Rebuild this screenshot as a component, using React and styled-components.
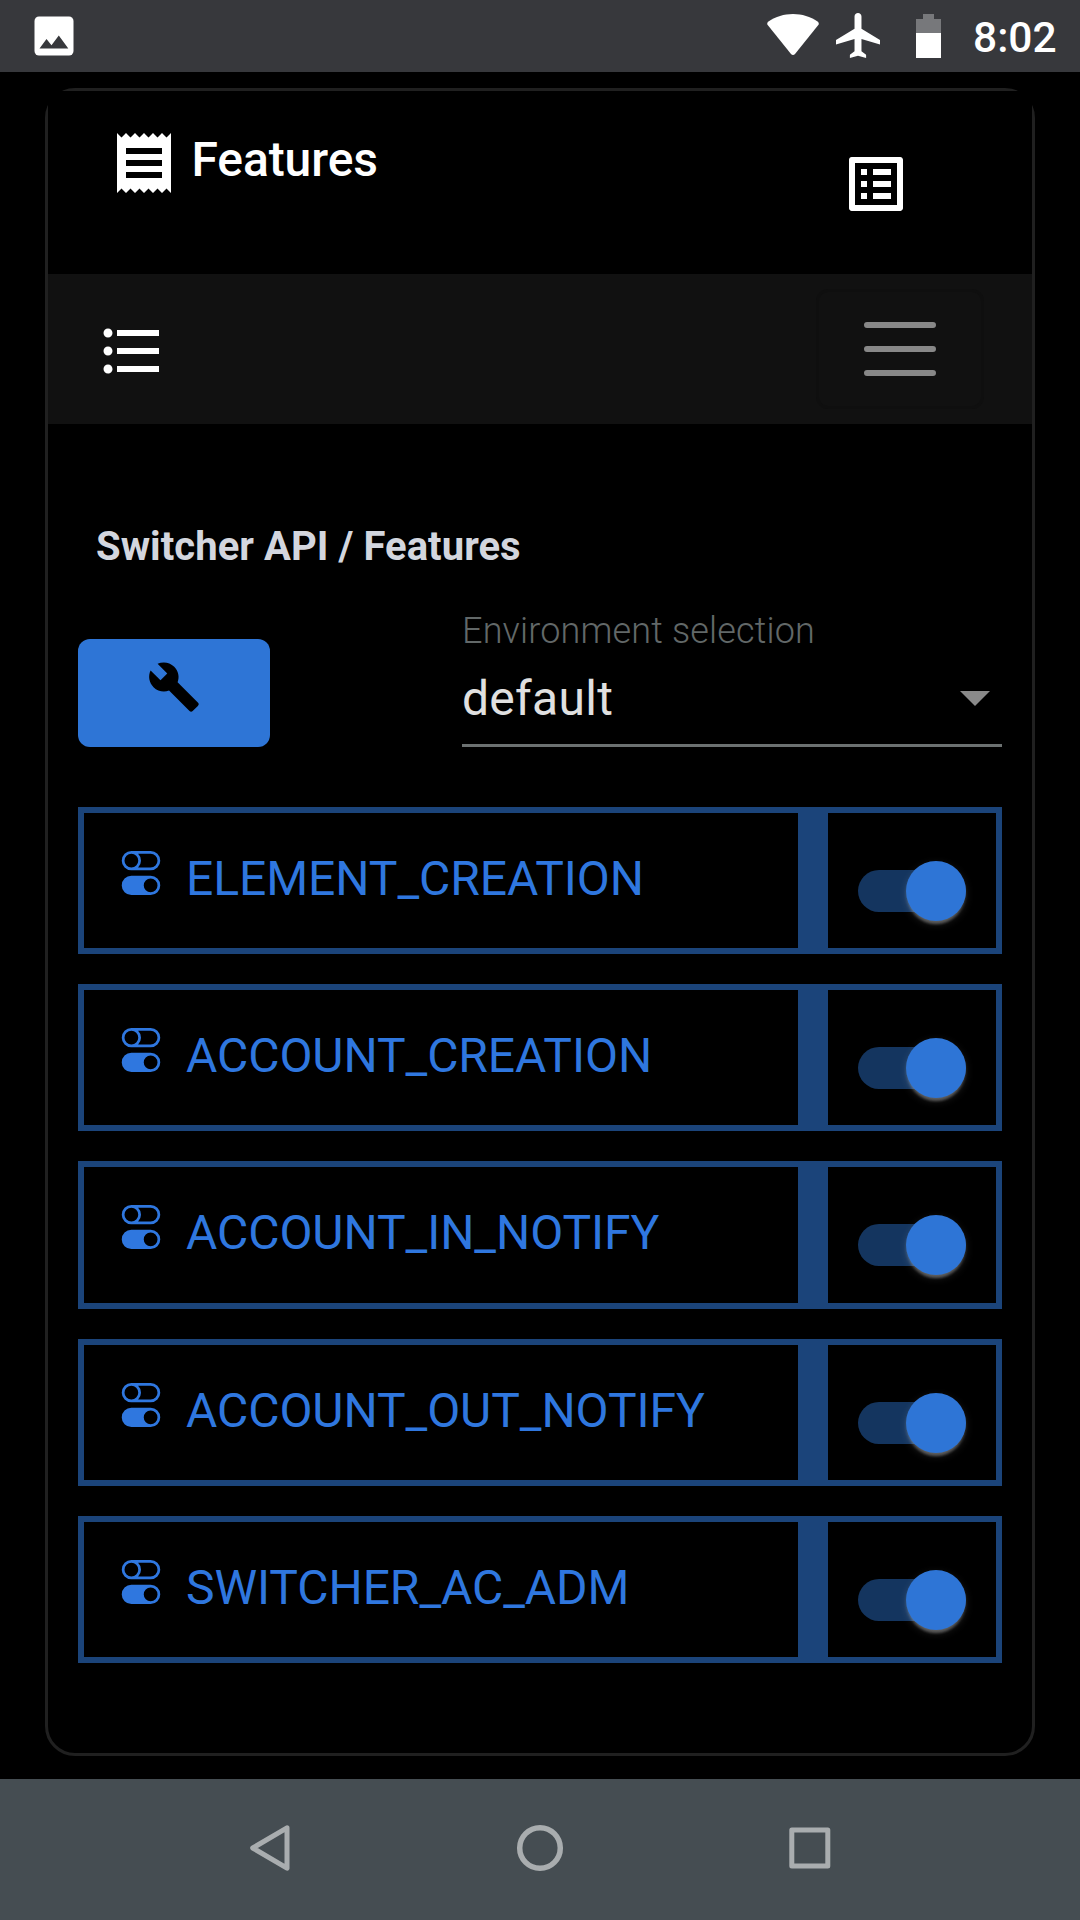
import React from "react";
import styled, { createGlobalStyle } from "styled-components";

const BLUE = "#2e75d6";
const LINK = "#2f77df";
const NAVY = "#1b447a";

const GlobalStyle = createGlobalStyle`
  * { box-sizing: border-box; }
  body { margin: 0; background: #000; font-family: Roboto, "Liberation Sans", sans-serif; }
  svg { display: block; flex: none; }
`;

const Screen = styled.div`
  width: 1080px;
  height: 1920px;
  display: flex;
  flex-direction: column;
  background: #000;
  overflow: hidden;
`;

const StatusBar = styled.header`
  height: 72px;
  flex: none;
  display: flex;
  align-items: flex-start;
  justify-content: space-between;
  padding: 0 24px 0 34px;
  background: #37383c;
  color: #fff;
`;

const StatusIcons = styled.div`
  display: flex;
  align-items: flex-start;
`;

const StatusSlot = styled.div`
  margin: ${(p) => p.$top}px ${(p) => p.$right}px 0 0;
`;

const Clock = styled.div`
  width: 83px;
  height: 72px;
  font-size: 42.5px;
  font-weight: 500;
  line-height: 75px;
  white-space: nowrap;
`;

const Card = styled.main`
  width: 990px;
  height: 1668px;
  flex: none;
  margin: 16px 0 23px 45px;
  border: 3px solid #202020;
  border-radius: 30px;
`;

const CardHeader = styled.div`
  height: 183px;
  display: flex;
  justify-content: space-between;
  padding: 36px 120px 0 60px;
  background: #000;
  color: #fff;
`;

const Heading = styled.h1`
  display: flex;
  margin: 0;
  gap: 11.5px;
  font-size: 48px;
  font-weight: 500;
  line-height: 65px;
  letter-spacing: -0.1px;
`;

const HeaderAction = styled.div`
  padding-top: 21px;
`;

const Toolbar = styled.div`
  height: 150px;
  display: flex;
  align-items: flex-start;
  justify-content: space-between;
  padding: 15px 48px 0 48px;
  background: #111;
  color: #fff;
`;

const ListButton = styled.div`
  padding-top: 26px;
`;

const Toggler = styled.div`
  width: 168px;
  height: 120px;
  display: flex;
  align-items: center;
  justify-content: center;
  border: 3px solid #0f0f0f;
  border-radius: 12px;
`;

const Content = styled.div`
  padding: 0 30px;
`;

const Breadcrumb = styled.div`
  padding: 98px 0 0 18px;
  height: 185px;
  font-size: 40px;
  font-weight: 700;
  line-height: 49px;
  letter-spacing: 0.05px;
  color: #d3d6de;
  white-space: nowrap;
`;

const Controls = styled.div`
  height: 198px;
  display: flex;
  align-items: flex-start;
  justify-content: space-between;
`;

const SettingsButton = styled.div`
  width: 192px;
  height: 108px;
  margin-top: 30px;
  padding-top: 21px;
  display: flex;
  justify-content: center;
  border-radius: 12px;
  background: ${BLUE};
  color: #000;
`;

const Select = styled.div`
  width: 540px;
  height: 138px;
  border-bottom: 3px solid #6c7171;
`;

const SelectLabel = styled.div`
  font-size: 36px;
  font-weight: 300;
  line-height: 44px;
  height: 60px;
  color: #626868;
  letter-spacing: 0.15px;
  white-space: nowrap;
`;

const SelectValue = styled.div`
  display: flex;
  align-items: center;
  justify-content: space-between;
  height: 60px;
  padding-right: 12px;
  font-size: 48px;
  line-height: 60px;
  letter-spacing: 0.3px;
  color: #e0e0e0;
`;

const SelectArrow = styled.svg`
  margin-bottom: 2px;
`;

const Features = styled.div`
  display: flex;
  flex-direction: column;
  gap: 30px;
`;

const FeatureRow = styled.div`
  height: 147.2px;
  display: flex;
  border: 6px solid ${NAVY};
`;

const FeatureName = styled.div`
  flex: 1;
  display: flex;
  align-items: flex-start;
  gap: 23px;
  padding: 38px 0 0 35px;
  color: ${LINK};
`;

const FeatureText = styled.span`
  font-size: 48px;
  line-height: 56px;
  letter-spacing: -0.05px;
  white-space: nowrap;
`;

const SwitchCell = styled.div`
  width: 198px;
  padding: 57px 0 0 30px;
  border-left: 30px solid ${NAVY};
`;

const SwitchTrack = styled.div`
  width: 108px;
  height: 42px;
  display: flex;
  align-items: center;
  justify-content: flex-end;
  border-radius: 21px;
  background: #14355f;
`;

const SwitchThumb = styled.div`
  width: 60px;
  height: 60px;
  flex: none;
  border-radius: 50%;
  background: ${BLUE};
  box-shadow: 0 6px 3px -3px rgba(255, 255, 255, 0.2), 0 3px 3px rgba(255, 255, 255, 0.14),
    0 3px 9px rgba(255, 255, 255, 0.12);
`;

const NavBar = styled.nav`
  height: 141px;
  flex: none;
  display: flex;
  justify-content: center;
  align-items: flex-start;
  gap: 222px;
  padding-top: 45px;
  background: #454d52;
`;

const Glyph = ({ size = 72, d }) => (
  <svg width={size} height={size} viewBox="0 0 24 24" fill="currentColor">
    <path d={d} />
  </svg>
);

const RECEIPT =
  "M18 17H6v-2h12v2zm0-4H6v-2h12v2zm0-4H6V7h12v2zM3 22l1.5-1.5L6 22l1.5-1.5L9 22l1.5-1.5L12 22l1.5-1.5L15 22l1.5-1.5L18 22l1.5-1.5L21 22V2l-1.5 1.5L18 2l-1.5 1.5L15 2l-1.5 1.5L12 2l-1.5 1.5L9 2 7.5 3.5 6 2 4.5 3.5 3 2v20z";
const LIST_ALT =
  "M19 5v14H5V5h14m1.1-2H3.9c-.5 0-.9.4-.9.9v16.2c0 .4.4.9.9.9h16.2c.4 0 .9-.5.9-.9V3.9c0-.5-.5-.9-.9-.9zM11 7h6v2h-6V7zm0 4h6v2h-6v-2zm0 4h6v2h-6zM7 7h2v2H7zm0 4h2v2H7zm0 4h2v2H7z";
const LIST_BULLETED =
  "M4 10.5c-.83 0-1.5.67-1.5 1.5s.67 1.5 1.5 1.5 1.5-.67 1.5-1.5-.67-1.5-1.5-1.5zm0-6c-.83 0-1.5.67-1.5 1.5S3.17 7.5 4 7.5 5.5 6.83 5.5 6 4.83 4.5 4 4.5zm0 12c-.83 0-1.5.68-1.5 1.5s.68 1.5 1.5 1.5 1.5-.68 1.5-1.5-.67-1.5-1.5-1.5zM7 19h14v-2H7v2zm0-6h14v-2H7v2zm0-8v2h14V5H7z";
const WRENCH =
  "M22.7 19l-9.1-9.1c.9-2.3.4-5-1.5-6.9-2-2-5-2.4-7.4-1.3L9 6 6 9 1.6 4.7C.4 7.1.9 10.1 2.9 12.1c1.9 1.9 4.6 2.4 6.9 1.5l9.1 9.1c.4.4 1 .4 1.4 0l2.3-2.3c.5-.4.5-1.1.1-1.4z";
const TOGGLES =
  "M4.5 9a3.5 3.5 0 1 0 0 7h7a3.5 3.5 0 1 0 0-7h-7zm7 6a2.5 2.5 0 1 1 0-5 2.5 2.5 0 0 1 0 5zm-7-14a2.5 2.5 0 1 0 0 5 2.5 2.5 0 0 0 0-5zm2.45 0A3.49 3.49 0 0 1 8 3.5 3.49 3.49 0 0 1 6.95 6h4.55a2.5 2.5 0 0 0 0-5H6.95zM4.5 0h7a3.5 3.5 0 1 1 0 7h-7a3.5 3.5 0 1 1 0-7z";

const FEATURES = [
  "ELEMENT_CREATION",
  "ACCOUNT_CREATION",
  "ACCOUNT_IN_NOTIFY",
  "ACCOUNT_OUT_NOTIFY",
  "SWITCHER_AC_ADM",
];

export default function App() {
  return (
    <Screen>
      <GlobalStyle />
      <StatusBar>
        <StatusSlot $top={16} $right={0}>
          <svg width="40" height="40" viewBox="0 0 40 40">
            <rect x="0.5" y="0.5" width="39" height="39" rx="4.5" fill="#fff" />
            <path d="M5.5 32.5l7-9.5 5 6.2 7.3-9.7 9.5 13z" fill="#37383c" />
          </svg>
        </StatusSlot>
        <StatusIcons>
          <StatusSlot $top={14} $right={17.5}>
            <svg width="52" height="42" viewBox="0 0 52 42" fill="#fff">
              <path d="M1.5 7.6C8.6 2.7 17 0 26 0s17.4 2.7 24.5 7.6c1.4 1 1.7 2.2.8 3.4L28 40c-1.2 1.4-2.8 1.4-4 0L.7 11C-.2 9.8.1 8.6 1.5 7.6z" />
            </svg>
          </StatusSlot>
          <StatusSlot $top={13} $right={36}>
            <svg width="44" height="45" viewBox="2 2 19 20" preserveAspectRatio="none" fill="#fff">
              <path d="M21 16v-2l-8-5V3.5c0-.83-.67-1.5-1.5-1.5S10 2.67 10 3.5V9l-8 5v2l8-2.5V19l-2 1.5V22l3.5-1 3.5 1v-1.5L13 19v-5.5l8 2.5z" />
            </svg>
          </StatusSlot>
          <StatusSlot $top={14} $right={32}>
            <svg width="25" height="44" viewBox="0 0 25 44" shapeRendering="crispEdges">
              <path d="M7 0h11v5h7v14H0V5h7z" fill="#77787b" />
              <path d="M0 19h25v25H0z" fill="#fff" />
            </svg>
          </StatusSlot>
          <Clock>8:02</Clock>
        </StatusIcons>
      </StatusBar>

      <Card>
        <CardHeader>
          <Heading>
            <Glyph d={RECEIPT} />
            Features
          </Heading>
          <HeaderAction>
            <Glyph d={LIST_ALT} />
          </HeaderAction>
        </CardHeader>

        <Toolbar>
          <ListButton>
            <Glyph d={LIST_BULLETED} />
          </ListButton>
          <Toggler>
            <svg width="90" height="90" viewBox="0 0 30 30">
              <path d="M4 7h22M4 15h22M4 23h22" stroke="#888" strokeWidth="2" strokeLinecap="round" />
            </svg>
          </Toggler>
        </Toolbar>

        <Content>
          <Breadcrumb>Switcher API / Features</Breadcrumb>
          <Controls>
            <SettingsButton>
              <Glyph size={54} d={WRENCH} />
            </SettingsButton>
            <Select>
              <SelectLabel>Environment selection</SelectLabel>
              <SelectValue>
                default
                <SelectArrow width="30" height="15" viewBox="0 0 30 15">
                  <path d="M0 0h30L15 15z" fill="#8a8a8a" />
                </SelectArrow>
              </SelectValue>
            </Select>
          </Controls>

          <Features>
            {FEATURES.map((name) => (
              <FeatureRow key={name}>
                <FeatureName>
                  <svg width="44" height="44" viewBox="0 0 16 16" fill="currentColor">
                    <path d={TOGGLES} />
                  </svg>
                  <FeatureText>{name}</FeatureText>
                </FeatureName>
                <SwitchCell>
                  <SwitchTrack>
                    <SwitchThumb />
                  </SwitchTrack>
                </SwitchCell>
              </FeatureRow>
            ))}
          </Features>
        </Content>
      </Card>

      <NavBar>
        <svg width="48" height="48" viewBox="0 0 48 48" fill="none" stroke="#a9adaf" strokeWidth="5" strokeLinejoin="round">
          <path d="M41 3.800L6.700 24 41 44.200z" />
        </svg>
        <svg width="48" height="48" viewBox="0 0 48 48" fill="none" stroke="#a9adaf" strokeWidth="5.5">
          <circle cx="24" cy="24" r="20.3" />
        </svg>
        <svg width="48" height="48" viewBox="0 0 48 48" fill="none" stroke="#a9adaf" strokeWidth="5" strokeLinejoin="round">
          <path d="M5.8 6h36v36h-36z" />
        </svg>
      </NavBar>
    </Screen>
  );
}
